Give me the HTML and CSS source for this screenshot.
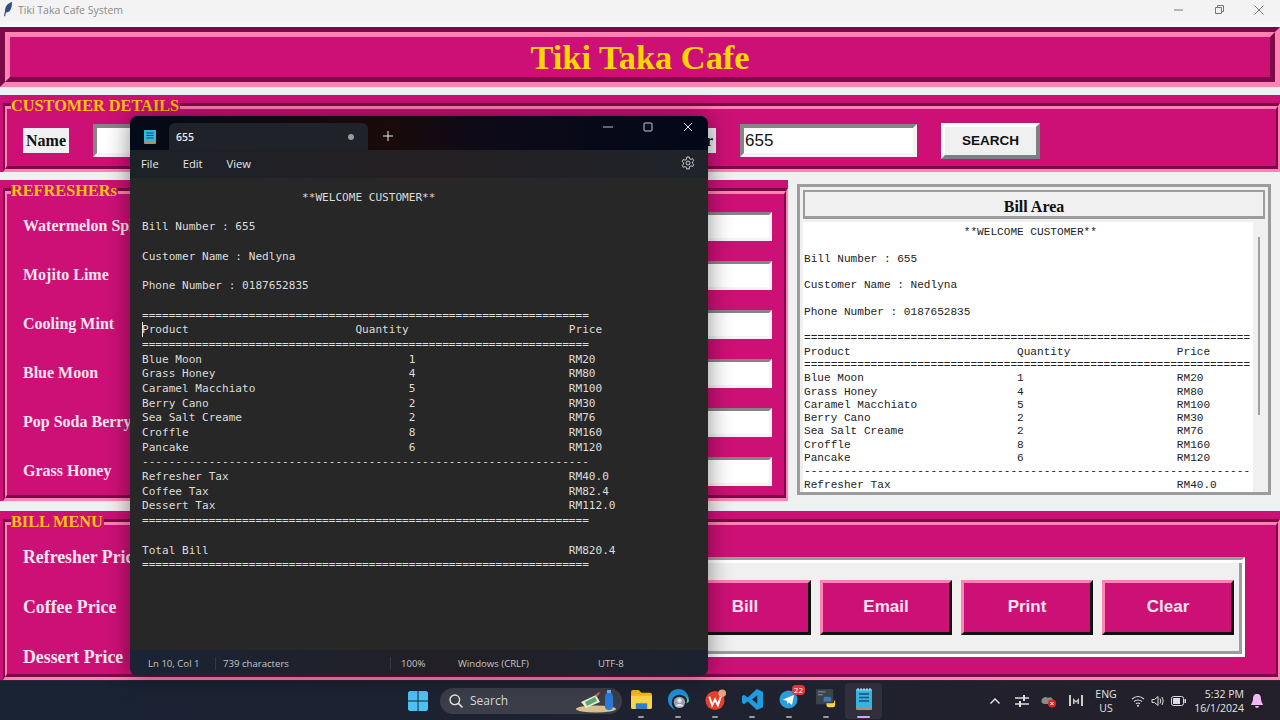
FILE: index.html
```html
<!DOCTYPE html>
<html lang="en">

<head>
    <meta charset="UTF-8">
    <title>Tiki Taka Cafe System</title>
    <link rel="stylesheet" href="styles.css">
</head>

<body>
    <div class="desktop">
        <div class="titlebar">
            <svg class="feather" width="10" height="15" viewBox="0 0 10 15">
                <path d="M9 0C5 1 2 4 2 9l-1 5 1 .5 1-4c4 0 6-4 6-10.500z" fill="#2f4f86" />
            </svg>
            <span class="titlebar-name">Tiki Taka Cafe System</span>
            <div class="win-btns">
                <svg width="40" height="18" viewBox="0 0 40 18"><path d="M15 9h9" stroke="#777" /></svg>
                <svg width="40" height="18" viewBox="0 0 40 18"><path d="M16.500 6.500h6v6h-6zM18.500 6.500v-2h6v6h-2" fill="none" stroke="#777" /></svg>
                <svg width="40" height="18" viewBox="0 0 40 18"><path d="M15.500 4.500l9 9M24.500 4.500l-9 9" stroke="#777" /></svg>
            </div>
        </div>

        <div class="app">
            <div class="title-frame">
                <div class="title-inner">
                    <h1 class="app-title">Tiki Taka Cafe</h1>
                </div>
            </div>

            <div class="section customer">
                <span class="legend">CUSTOMER DETAILS</span>
                <div class="groove">
                    <div class="groove-in customer-row">
                        <span class="tag">Name</span>
                        <div class="entry"></div>
                        <span class="tag">Phone Number</span>
                        <div class="entry"></div>
                        <span class="tag">Bill Number</span>
                        <div class="entry">655</div>
                        <button class="search-btn">SEARCH</button>
                    </div>
                </div>
            </div>

            <div class="middle">
                <div class="section refreshers">
                    <span class="legend">REFRESHERs</span>
                    <div class="groove">
                        <div class="groove-in item-list">
                            <div class="item"><span>Watermelon Splash</span><div class="entry small"></div></div>
                            <div class="item"><span>Mojito Lime</span><div class="entry small"></div></div>
                            <div class="item"><span>Cooling Mint</span><div class="entry small"></div></div>
                            <div class="item"><span>Blue Moon</span><div class="entry small"></div></div>
                            <div class="item"><span>Pop Soda Berry</span><div class="entry small"></div></div>
                            <div class="item"><span>Grass Honey</span><div class="entry small"></div></div>
                        </div>
                    </div>
                </div>

                <div class="bill-area">
                    <div class="bill-head">Bill Area</div>
                    <div class="bill-body">
<pre class="bill-text">                        **WELCOME CUSTOMER**

Bill Number : 655

Customer Name : Nedlyna

Phone Number : 0187652835

===================================================================
Product                         Quantity                Price
===================================================================
Blue Moon                       1                       RM20
Grass Honey                     4                       RM80
Caramel Macchiato               5                       RM100
Berry Cano                      2                       RM30
Sea Salt Creame                 2                       RM76
Croffle                         8                       RM160
Pancake                         6                       RM120
-------------------------------------------------------------------
Refresher Tax                                           RM40.0</pre>
                        <div class="scrollbar"><div class="thumb"></div></div>
                    </div>
                </div>
            </div>

            <div class="section bill-menu">
                <span class="legend">BILL MENU</span>
                <div class="groove">
                    <div class="groove-in menu-row">
                        <div class="price-list">
                            <div class="price">Refresher Price</div>
                            <div class="price">Coffee Price</div>
                            <div class="price">Dessert Price</div>
                        </div>
                        <div class="btn-frame">
                            <button class="action">Total</button>
                            <button class="action">Bill</button>
                            <button class="action">Email</button>
                            <button class="action">Print</button>
                            <button class="action">Clear</button>
                        </div>
                    </div>
                </div>
            </div>
        </div>

        <div class="taskbar">
            <div class="tb-cell start">
                <svg width="20" height="20" viewBox="0 0 20 20">
                    <path d="M0 1.500L1.500 0H9.500V9.500H0zM10.500 0H18.500L20 1.500V9.500H10.500zM0 10.500H9.500V20H1.500L0 18.500zM10.500 10.500H20V18.500L18.500 20H10.500z" fill="#4cc2f4" />
                </svg>
            </div>
            <div class="search-pill">
                <svg width="16" height="16" viewBox="0 0 16 16">
                    <circle cx="6.800" cy="6.800" r="4.800" fill="none" stroke="#e6e6e6" stroke-width="1.400" />
                    <path d="M10.400 10.400L14.500 14.500" stroke="#e6e6e6" stroke-width="1.500" />
                </svg>
                <span class="search-word">Search</span>
                <svg class="search-art" width="42" height="24" viewBox="0 0 42 24">
                    <ellipse cx="20" cy="20" rx="20" ry="3.500" fill="#d8c08c" />
                    <path d="M5 13l15-7 4 7-14 6z" fill="#e6ead8" />
                    <path d="M9 13l10-5 2 4-10 5z" fill="#5da86a" />
                    <path d="M19 6l4-3 1 1-3 4z" fill="#e8603c" />
                    <path d="M29 8c0-3 2-5 4-5s4 2 4 5v10c0 2-2 3-4 3s-4-1-4-3z" fill="#2a78d8" />
                    <rect x="31" y="1" width="4" height="3" fill="#6db4f0" />
                </svg>
            </div>
            <div class="tb-icon">
                <svg width="21" height="19" viewBox="0 0 22 20">
                    <path d="M0 2q0-2 2-2h6l3 3h9q2 0 2 2v13q0 2-2 2H2q-2 0-2-2z" fill="#f5b914" />
                    <path d="M0 6h22v12q0 2-2 2H2q-2 0-2-2z" fill="#fdd445" />
                    <rect x="5" y="14" width="12" height="6" fill="#2c7fd0" />
                </svg>
            </div>
            <div class="tb-icon">
                <svg width="21" height="21" viewBox="0 0 22 22">
                    <path d="M11 0C5 0 0 5 0 11c0 5 3 9 8 11-3-2-4-5-4-8 0-5 4-8 8-8 5 0 9 3 10 6 0-7-5-12-11-12z" fill="#1f8fd8" />
                    <path d="M22 12c-1-4-5-6-9-6 4 0 7 3 7 6 0 1-.5 2-1 3 2-.5 3-1.500 3-3z" fill="#54d08a" />
                    <circle cx="12" cy="14" r="6" fill="#9aa3ad" />
                    <circle cx="12" cy="12" r="2.300" fill="#e6e8ea" />
                    <path d="M8 18c1-3 7-3 8 0z" fill="#e6e8ea" />
                </svg>
            </div>
            <div class="tb-icon">
                <svg width="21" height="21" viewBox="0 0 22 22">
                    <circle cx="10.500" cy="12" r="10" fill="#e8402a" />
                    <path d="M4.500 8l3 9 3-6 3 6 3-9" fill="none" stroke="#fff" stroke-width="2" />
                    <circle cx="18" cy="4.500" r="4" fill="#f0a080" />
                </svg>
            </div>
            <div class="tb-icon">
                <svg width="21" height="21" viewBox="0 0 22 22">
                    <path d="M15.500 0L22 3v16l-6.500 3L6 13l-4 3-2-1.500V7.500L2 6l4 3zM16 6.500L10.500 11l5.500 4.500z" fill="#1f9be0" fill-rule="evenodd" />
                </svg>
            </div>
            <div class="tb-icon">
                <svg width="22" height="20" viewBox="0 0 22 20">
                    <circle cx="9.500" cy="10.500" r="9" fill="#2a9fd8" />
                    <path d="M4 10.500l11-4.500-2 10-3-2.500-1.500 1.500-.5-3z" fill="#fff" />
                </svg>
                <span class="badge">22</span>
            </div>
            <div class="tb-icon">
                <svg width="21" height="21" viewBox="0 0 22 22">
                    <rect x="0" y="0" width="18" height="16" fill="#3a424c" />
                    <path d="M2 3h8M2 6h5" stroke="#8fa0a8" />
                    <path d="M9 8h5q2 0 2 2v3h-6q-2 0-2 2v-5q0-2 1-2z" fill="#3f78b0" />
                    <path d="M20 12v5q0 2-2 2h-5q-2 0-2-2v-2h6q2 0 2-2v-1z" fill="#f6d24a" />
                </svg>
            </div>
            <div class="tb-icon active">
                <svg width="16" height="22" viewBox="0 0 16 22">
                    <rect x="0" y="1" width="16" height="21" rx="1" fill="#b78d5e" />
                    <rect x="0" y="1" width="16" height="18" fill="#36b4e0" />
                    <path d="M3 6h10M3 9.500h10M3 13h10" stroke="#1a4f78" stroke-width="1.300" />
                    <path d="M2 0v3M5 0v3M8 0v3M11 0v3M14 0v3" stroke="#cfe8f4" />
                </svg>
            </div>

            <div class="tray">
                <div class="tray-cell">
                    <svg width="12" height="8" viewBox="0 0 12 8"><path d="M1.500 6.500L6 2l4.500 4.500" fill="none" stroke="#eee" stroke-width="1.400" /></svg>
                </div>
                <div class="tray-cell">
                    <svg width="14" height="12" viewBox="0 0 14 12"><path d="M0 3h14M0 9h14" stroke="#ddd" stroke-width="1.500" /><path d="M9 0v6M5 6v6" stroke="#ddd" stroke-width="2" /></svg>
                </div>
                <div class="tray-cell">
                    <svg width="16" height="14" viewBox="0 0 16 14">
                        <path d="M1 9a4 4 0 0 1 6-5 3 3 0 0 1 5 2v4H3z" fill="#8a8a8a" />
                        <circle cx="11" cy="9.500" r="4" fill="#e0252c" />
                        <path d="M9.500 8l3 3M12.500 8l-3 3" stroke="#fff" />
                    </svg>
                </div>
                <div class="tray-cell">
                    <svg width="14" height="11" viewBox="0 0 14 11"><path d="M1 0v11M13 0v11" stroke="#ccc" stroke-width="2" /><path d="M4 3v6h1.500V6L7 8l1.500-2v3H10V3L7 6z" fill="#ccc" /></svg>
                </div>
                <div class="lang"><span>ENG</span><span>US</span></div>
                <div class="tray-status">
                    <svg width="14" height="12" viewBox="0 0 14 12"><path d="M1 4q6-5 12 0M3 6.500q4-3 8 0M5 8.800q2-1.500 4 0" fill="none" stroke="#ddd" stroke-width="1.100" /><circle cx="7" cy="10.800" r="1" fill="#ddd" /></svg>
                    <svg width="14" height="12" viewBox="0 0 14 12"><path d="M1 4.500h2.500L7 1.500v9l-3.500-3H1z" fill="none" stroke="#ddd" /><path d="M9 3.500q1.500 2.500 0 5M11 2q2.500 4 0 8" fill="none" stroke="#ddd" /></svg>
                    <svg width="15" height="10" viewBox="0 0 15 10"><rect x=".5" y=".5" width="12" height="9" rx="2" fill="none" stroke="#ddd" /><rect x="2" y="2" width="7" height="6" fill="#ddd" /><rect x="13.500" y="3" width="1.500" height="4" fill="#ddd" /></svg>
                </div>
                <div class="clock"><span>5:32 PM</span><span>16/1/2024</span></div>
                <div class="tray-bell">
                    <svg width="12" height="14" viewBox="0 0 12 14"><path d="M6 0c3 0 4 2 4 5 0 3 2 5 2 6H0c0-1 2-3 2-6 0-3 1-5 4-5z" fill="#f2b8f2" /><path d="M4 12h4q-.5 2-2 2t-2-2z" fill="#f2b8f2" /></svg>
                </div>
            </div>
        </div>

        <!-- notepad window sitting over the cafe app -->
        <div class="notepad">
            <div class="np-tabs">
                <div class="np-logo">
                    <svg width="12" height="14" viewBox="0 0 12 14">
                        <rect width="12" height="14" rx="1" fill="#b78d5e" />
                        <rect width="12" height="12" fill="#36b4e0" />
                        <path d="M2.500 3h7M2.500 5.500h7M2.500 8h7" stroke="#12456c" />
                    </svg>
                </div>
                <div class="np-tab">
                    <span>655</span>
                    <i class="np-dot"></i>
                </div>
                <svg class="np-plus" width="10" height="10" viewBox="0 0 10 10"><path d="M5 0v10M0 5h10" stroke="#eee" /></svg>
                <div class="np-ctrl">
                    <svg width="40" height="20" viewBox="0 0 40 20"><path d="M15 10h10" stroke="#bbb" /></svg>
                    <svg width="40" height="20" viewBox="0 0 40 20"><rect x="16" y="6" width="8" height="8" rx="1" fill="none" stroke="#ccd" /></svg>
                    <svg width="40" height="20" viewBox="0 0 40 20"><path d="M16 6l8 8M24 6l-8 8" stroke="#ddd" /></svg>
                </div>
            </div>
            <div class="np-menu">
                <span>File</span>
                <span>Edit</span>
                <span>View</span>
                <svg class="np-gear" width="14" height="14" viewBox="0 0 14 14">
                    <circle cx="7" cy="7" r="2" fill="none" stroke="#ccc" />
                    <path d="M5.800 1h2.400l.4 1.700 1.500.7 1.500-.8 1.200 2-1.300 1.200v1.600l1.300 1.200-1.200 2-1.500-.8-1.500.7L8.200 13H5.800l-.4-1.700-1.500-.7-1.500.8-1.200-2 1.300-1.200V6.600L1.200 5.400l1.200-2 1.500.8 1.500-.7z" fill="none" stroke="#ccc" />
                </svg>
            </div>
            <div class="np-text">
                <i class="caret"></i>
<pre class="np-pre">                        **WELCOME CUSTOMER**

Bill Number : 655

Customer Name : Nedlyna

Phone Number : 0187652835

===================================================================
Product                         Quantity                        Price
===================================================================
Blue Moon                               1                       RM20
Grass Honey                             4                       RM80
Caramel Macchiato                       5                       RM100
Berry Cano                              2                       RM30
Sea Salt Creame                         2                       RM76
Croffle                                 8                       RM160
Pancake                                 6                       RM120
-------------------------------------------------------------------
Refresher Tax                                                   RM40.0
Coffee Tax                                                      RM82.4
Dessert Tax                                                     RM112.0
===================================================================

Total Bill                                                      RM820.4
===================================================================</pre>
            </div>
            <div class="np-status">
                <span class="st-pos">Ln 10, Col 1</span>
                <span class="st-count">739 characters</span>
                <span class="st-zoom">100%</span>
                <span class="st-eol">Windows (CRLF)</span>
                <span class="st-enc">UTF-8</span>
            </div>
        </div>
    </div>
</body>

</html>
```

FILE: styles.css
```css
* {
    margin: 0;
    padding: 0;
    box-sizing: border-box;
}

body {
    width: 1280px;
    height: 720px;
    overflow: hidden;
    background: #f0f0f0;
}

.desktop {
    position: relative;
    display: flex;
    flex-direction: column;
    width: 1280px;
    height: 720px;
    font-family: "Liberation Serif", serif;
}

/* app window title */
.titlebar {
    display: flex;
    align-items: center;
    height: 27px;
    padding-bottom: 8px;
    padding-left: 3px;
    background: linear-gradient(#f3f3f3 70%, #fbfbfb);
}

.feather {
    margin-right: 5px;
}

.titlebar-name {
    font: 10.5px "Open Sans", sans-serif;
    color: #8a8a8a;
}

.win-btns {
    display: flex;
    margin-left: auto;
    margin-right: 1px;
}

/* cafe app */
.app {
    display: flex;
    flex-direction: column;
    height: 653px;
    overflow: hidden;
}

.title-frame {
    height: 60px;
    border: 5px solid;
    border-color: #7d0a48 #ff82b2 #ff82b2 #7d0a48;
}

.title-inner {
    display: flex;
    justify-content: center;
    align-items: center;
    height: 100%;
    background: #cd1076;
    border: 5px solid;
    border-color: #ff82b2 #7d0a48 #7d0a48 #ff82b2;
}

.app-title {
    font-size: 34.400px;
    font-weight: bold;
    color: #ffd700;
}

.section {
    position: relative;
    padding: 8px 0 0 3px;
    background: #cd1076;
}

.legend {
    position: absolute;
    top: 1px;
    left: 11px;
    padding-right: 1px;
    background: #cd1076;
    font-size: 16.300px;
    font-weight: bold;
    color: #ffc30f;
}

.groove {
    height: 100%;
    border: solid;
    border-width: 3px 2px;
    border-color: #7d0a48 #ff82b2 #ff82b2 #7d0a48;
}

.groove-in {
    height: 100%;
    border: solid;
    border-width: 3px 2px;
    border-color: #ff82b2 #7d0a48 #7d0a48 #ff82b2;
}

.customer {
    height: 77px;
    margin-top: 8px;
}

.customer-row {
    display: grid;
    grid-template-columns: 46px 177px 107px 177px 90px 177px 99px;
    column-gap: 24px;
    align-items: center;
    padding: 6px 0 0 16px;
}

.tag {
    height: 25px;
    line-height: 25px;
    text-align: right;
    padding-right: 3px;
    background: #f0f0f0;
    font-size: 16px;
    font-weight: bold;
    color: #111;
    white-space: nowrap;
}

.entry {
    height: 33px;
    padding-left: 1px;
    background: #fff;
    border: 4px solid;
    border-color: #858585 #f4f4f4 #f4f4f4 #858585;
    font: 17px/25px "Liberation Sans", sans-serif;
    color: #111;
}

.search-btn {
    height: 36px;
    background: #f0f0f0;
    border: 4px solid;
    border-color: #fff #7f7f7f #7f7f7f #fff;
    font: bold 13.500px "Liberation Sans", sans-serif;
    color: #111;
}

.middle {
    display: flex;
    gap: 9px;
    height: 321px;
    margin-top: 8px;
}

.refreshers {
    width: 788px;
    height: 321px;
}

.item-list {
    padding: 7.500px 12px 0 16px;
}

.item {
    display: flex;
    justify-content: space-between;
    align-items: center;
    height: 49px;
    font-size: 16px;
    font-weight: bold;
    color: #fbe4ee;
}

.entry.small {
    width: 180px;
    height: 29px;
    border-width: 3px;
}

/* bill text area on the right */
.bill-area {
    display: flex;
    flex-direction: column;
    width: 474px;
    height: 311px;
    margin-top: 4px;
    padding: 3px 3px 0;
    border: 3px solid #9c9c9c;
}

.bill-head {
    flex: none;
    height: 29px;
    line-height: 29px;
    text-align: center;
    border: 2px solid #9c9c9c;
    border-bottom-width: 3px;
    font-size: 16px;
    font-weight: bold;
    color: #111;
}

.bill-body {
    display: flex;
    flex: 1;
    min-height: 0;
    margin-top: 3px;
}

.bill-text {
    flex: 1;
    overflow: hidden;
    padding: 4px 0 0 1px;
    background: #fff;
    font: 11.100px/13.300px "Liberation Mono", monospace;
    color: #222;
}

.scrollbar {
    flex: none;
    width: 12px;
    padding: 15px 0 0 5px;
}

.thumb {
    width: 2px;
    height: 178px;
    background: #a0a0a0;
}

.bill-menu {
    height: 169px;
    margin-top: 10px;
}

.menu-row {
    display: flex;
    justify-content: space-between;
    overflow: hidden;
}

.price-list {
    padding: 7px 0 0 16px;
}

.price {
    height: 50px;
    line-height: 50px;
    font-size: 17.800px;
    font-weight: bold;
    color: #fbe4ee;
}

.btn-frame {
    display: flex;
    align-items: center;
    gap: 9px;
    height: 100px;
    margin: 32px 31px 0 0;
    padding: 0 8px;
    background: #f0f0f0;
    border: 3px solid;
    border-color: #9c9c9c #fff #fff #9c9c9c;
    box-shadow: inset 3px 3px 0 #fff, inset -3px -3px 0 #9c9c9c;
}

.action {
    width: 132px;
    height: 55px;
    background: #cd1076;
    border: 3px solid;
    border-color: #ff82b2 #111 #111 #ff82b2;
    font: bold 17px "Liberation Sans", sans-serif;
    color: #fbe4ee;
}

/* windows taskbar */
.taskbar {
    display: flex;
    align-items: center;
    height: 40px;
    padding-left: 400px;
    background: linear-gradient(90deg, #182233, #1f2230 55%, #231f29);
    border-top: 1px solid #2d2530;
}

.tb-cell {
    display: flex;
    justify-content: center;
    align-items: center;
    width: 36px;
}

.search-pill {
    display: flex;
    align-items: center;
    width: 182px;
    height: 26px;
    margin-left: 4px;
    margin-right: 1px;
    padding: 0 4px 0 8px;
    border-radius: 13px;
    background: #3b3e49;
}

.search-word {
    margin-left: 6px;
    font: 12px "Open Sans", sans-serif;
    color: #d8d8d8;
}

.search-art {
    margin-left: auto;
}

.tb-icon {
    position: relative;
    display: flex;
    justify-content: center;
    align-items: center;
    width: 37px;
    height: 36px;
    border-radius: 4px;
    padding-bottom: 3px;
}

.tb-icon::after {
    content: "";
    position: absolute;
    left: 15px;
    bottom: 1px;
    width: 6px;
    height: 2px;
    border-radius: 1px;
    background: #9a9a9a;
}

.tb-icon.active {
    background: rgba(255, 255, 255, 0.07);
}

.tb-icon.active::after {
    left: 12px;
    width: 13px;
    background: #d7a6ea;
}

.badge {
    position: absolute;
    top: 2px;
    right: 3px;
    padding: 0 2px;
    border-radius: 4px;
    background: #e0373f;
    font: 8px/10px "Open Sans", sans-serif;
    color: #fff;
}

.tray {
    display: flex;
    align-items: center;
    margin-left: auto;
    padding-right: 13px;
    font: 10.500px/14px "Open Sans", sans-serif;
    color: #e4e4e4;
}

.tray-cell {
    display: flex;
    justify-content: center;
    width: 27px;
}

.lang {
    display: flex;
    flex-direction: column;
    align-items: center;
    width: 34px;
}

.tray-status {
    display: flex;
    gap: 6px;
    align-items: center;
    margin-left: 8px;
}

.clock {
    display: flex;
    flex-direction: column;
    align-items: flex-end;
    width: 58px;
    margin-right: 3px;
}

.tray-bell {
    display: flex;
    justify-content: center;
    width: 20px;
}

/* notepad */
.notepad {
    position: absolute;
    top: 116px;
    left: 130px;
    display: flex;
    flex-direction: column;
    width: 578px;
    height: 560px;
    overflow: hidden;
    border-radius: 8px;
    background: #272727;
    box-shadow: 0 0 24px rgba(0, 0, 0, 0.45);
    font-family: "Open Sans", sans-serif;
    color: #e8e8e8;
}

.np-tabs {
    display: flex;
    align-items: flex-end;
    flex: none;
    height: 34px;
    background: linear-gradient(90deg, #030a18, #1a0a0a 45%, #0e0a18 60%, #020818);
}

.np-logo {
    display: flex;
    justify-content: center;
    align-items: center;
    width: 39px;
    height: 27px;
}

.np-tab {
    display: flex;
    justify-content: space-between;
    align-items: center;
    width: 199px;
    height: 27px;
    padding: 0 14px 0 7px;
    border-radius: 6px 6px 0 0;
    background: #1f2228;
    font-size: 10.500px;
    font-weight: 600;
}

.np-dot {
    width: 6px;
    height: 6px;
    border-radius: 50%;
    background: #9a9a9a;
}

.np-plus {
    margin: 0 0 9px 15px;
}

.np-ctrl {
    display: flex;
    align-self: flex-start;
    margin-left: auto;
    padding-top: 1px;
}

.np-menu {
    display: flex;
    align-items: center;
    flex: none;
    height: 28px;
    padding: 0 0 2px 11px;
    background: linear-gradient(90deg, #1c2128, #241f22 50%, #20242a);
    font-size: 11.200px;
}

.np-menu span:nth-child(-n+2) {
    margin-right: 24px;
}

.np-gear {
    margin-left: auto;
    margin-right: 13px;
}

.np-text {
    position: relative;
    flex: 1;
    padding: 13px 0 0 12px;
}

.np-pre {
    font: 11.080px/14.680px "DejaVu Sans Mono", monospace;
    color: #dcdcdc;
}

.caret {
    position: absolute;
    top: 144px;
    left: 12px;
    width: 1px;
    height: 15px;
    background: #e8e8e8;
}

.np-status {
    display: flex;
    align-items: center;
    flex: none;
    height: 26px;
    padding-left: 18px;
    background: linear-gradient(90deg, #1a2434, #221f26 55%, #1c2230);
    font-size: 9.600px;
    color: #c4c4c4;
}

.st-pos {
    width: 68px;
    border-right: 1px solid #333a44;
}

.st-count {
    width: 175px;
    padding-left: 7px;
    border-right: 1px solid #333a44;
}

.st-zoom {
    width: 67px;
    padding-left: 10px;
}

.st-eol {
    width: 140px;
}
```
